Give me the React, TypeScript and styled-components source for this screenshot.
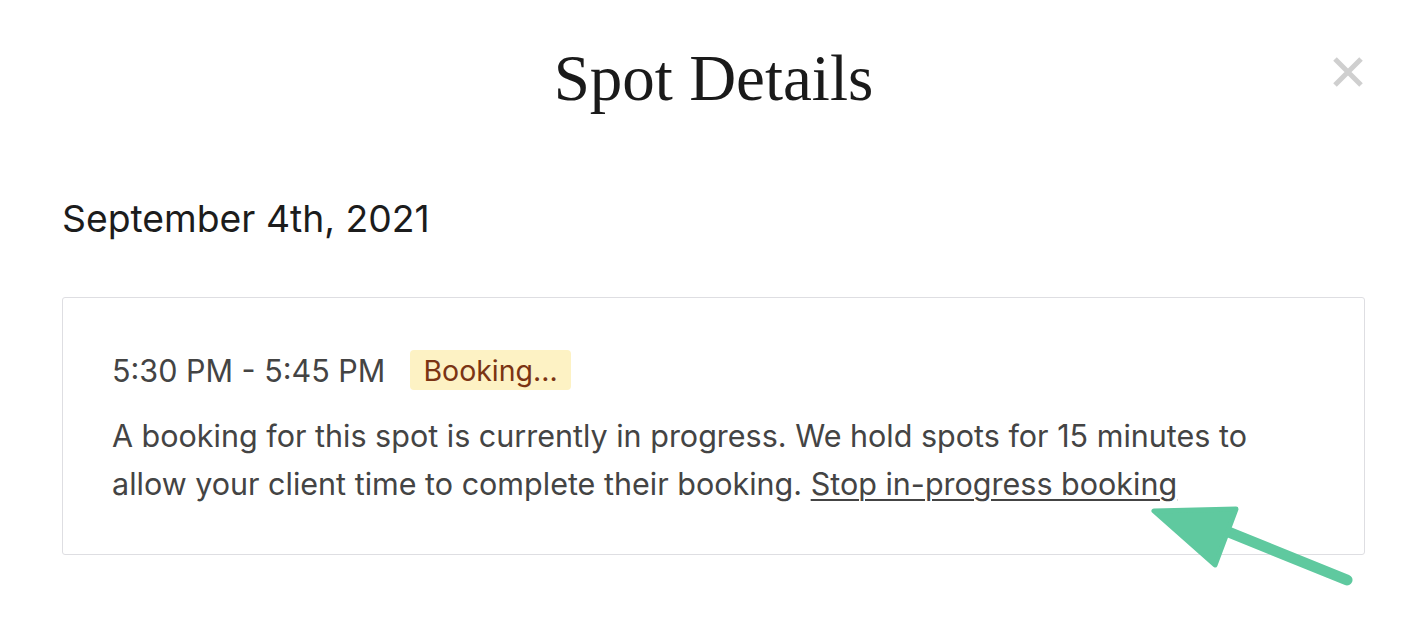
import styled, { createGlobalStyle } from 'styled-components';

const GlobalStyle = createGlobalStyle`
  html, body {
    margin: 0;
    padding: 0;
    background: #ffffff;
  }
  body {
    font-family: Inter, "Liberation Sans", Arial, sans-serif;
    -webkit-font-smoothing: antialiased;
  }
`;

const Modal = styled.div`
  position: relative;
  width: 1428px;
  height: 634px;
  box-sizing: border-box;
  padding: 36px 63px 0 62px;
  background: #fff;
`;

const Header = styled.div`
  display: flex;
  justify-content: center;
  align-items: center;
  height: 84px;
`;

const Title = styled.h1`
  margin: 0;
  font-family: "Liberation Serif", "Times New Roman", serif;
  font-weight: 400;
  font-size: 65px;
  color: #1a1a1a;
`;

const CloseButton = styled.button`
  position: absolute;
  top: 54px;
  right: 62px;
  width: 36px;
  height: 36px;
  padding: 0;
  border: none;
  background: none;
  cursor: pointer;
  display: flex;
  align-items: center;
  justify-content: center;
`;

const DateHeading = styled.h2`
  margin: 77px 0 0;
  font-size: 37.3px;
  font-weight: 400;
  color: #1c1c1c;
  line-height: 44px;
`;

const SpotCard = styled.div`
  margin-top: 56px;
  border: 1.5px solid #dedee2;
  border-radius: 3px;
  padding: 52px 56px 46px 49px;
`;

const TimeRow = styled.div`
  display: flex;
  align-items: center;
  gap: 25px;
`;

const TimeText = styled.span`
  font-size: 30.5px;
  color: #444;
`;

const Badge = styled.span`
  display: inline-flex;
  align-items: center;
  height: 40px;
  padding: 0 13px;
  border-radius: 4px;
  background: #fdf2c4;
  color: #7b3413;
  font-size: 28.5px;
`;

const Body = styled.p`
  margin: 22px 0 0;
  font-size: 30.5px;
  line-height: 48px;
  color: #444;
`;

const StopLink = styled.a`
  color: #444;
  text-decoration: underline;
  text-underline-offset: 4px;
  text-decoration-thickness: 2px;
  cursor: pointer;
`;

const Annotation = styled.svg`
  position: absolute;
  left: 0;
  top: 0;
  pointer-events: none;
`;

export default function App() {
  return (
    <>
      <GlobalStyle />
      <Modal>
        <Header>
          <Title>Spot Details</Title>
        </Header>
        <CloseButton aria-label="Close">
          <svg width="32" height="32" viewBox="0 0 32 32">
            <path d="M3 3 L29 29 M29 3 L3 29" stroke="#cfcfcf" strokeWidth="5" />
          </svg>
        </CloseButton>
        <DateHeading>September 4th, 2021</DateHeading>
        <SpotCard>
          <TimeRow>
            <TimeText>5:30 PM - 5:45 PM</TimeText>
            <Badge>Booking...</Badge>
          </TimeRow>
          <Body>
            A booking for this spot is currently in progress. We hold spots for 15 minutes to
            allow your client time to complete their booking.{' '}
            <StopLink>Stop in-progress booking</StopLink>
          </Body>
        </SpotCard>
        <Annotation width="1428" height="634" viewBox="0 0 1428 634">
          <line x1="1226" y1="531" x2="1347" y2="580" stroke="#5fc99f" strokeWidth="11" strokeLinecap="round" />
          <polygon
            points="1154,511 1236,509 1215,565"
            fill="#5fc99f"
            stroke="#5fc99f"
            strokeWidth="5"
            strokeLinejoin="round"
          />
        </Annotation>
      </Modal>
    </>
  );
}
